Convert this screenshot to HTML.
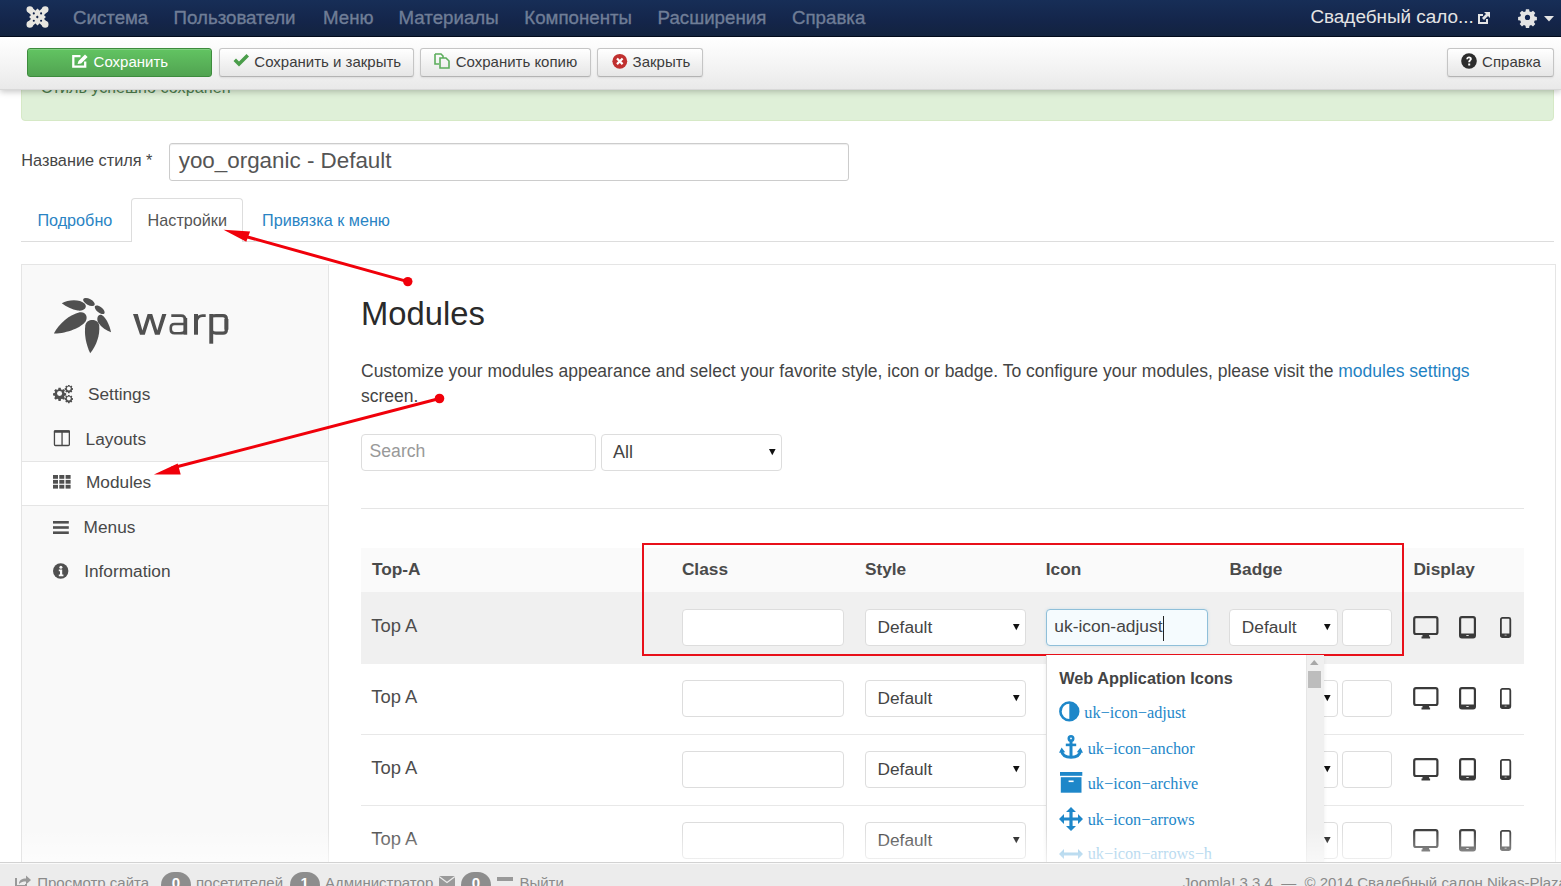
<!DOCTYPE html><html><head><meta charset="utf-8"><style>
*{margin:0;padding:0;box-sizing:border-box}
html,body{width:1561px;height:886px;overflow:hidden;background:#fff;font-family:"Liberation Sans",sans-serif}
.t{position:absolute;white-space:nowrap}
.b{position:absolute}
svg{position:absolute;overflow:visible}
</style></head><body><div class="b" style="left:21px;top:70px;width:1533px;height:50.5px;background:#dff0d8;border:1px solid #d6e9c6;border-radius:4px"></div>
<div class="t" style="left:40.8px;top:79.29px;font-size:16.2px;line-height:16.2px;color:#4d7d4d;font-weight:400;font-family:'Liberation Sans', sans-serif;">Стиль успешно сохранен</div>
<div class="b" style="left:0px;top:37px;width:1561px;height:53px;background:linear-gradient(#ffffff,#f3f3f3 60%,#e9e9e9);box-shadow:0 2px 6px rgba(0,0,0,.22);border-bottom:1px solid #d8d8d8"></div>
<div class="b" style="left:27px;top:48px;width:185px;height:29px;background:linear-gradient(#62c462,#51a351);border:1px solid #3d8b3d;border-radius:3px;box-shadow:inset 0 1px 0 rgba(255,255,255,.2)"></div>
<div class="b" style="left:219px;top:48px;width:195px;height:29px;background:linear-gradient(#ffffff,#e6e6e6);border:1px solid #c5c5c5;border-bottom-color:#b3b3b3;border-radius:3px;box-shadow:0 1px 2px rgba(0,0,0,.08)"></div>
<div class="b" style="left:420px;top:48px;width:171px;height:29px;background:linear-gradient(#ffffff,#e6e6e6);border:1px solid #c5c5c5;border-bottom-color:#b3b3b3;border-radius:3px;box-shadow:0 1px 2px rgba(0,0,0,.08)"></div>
<div class="b" style="left:597px;top:48px;width:106px;height:29px;background:linear-gradient(#ffffff,#e6e6e6);border:1px solid #c5c5c5;border-bottom-color:#b3b3b3;border-radius:3px;box-shadow:0 1px 2px rgba(0,0,0,.08)"></div>
<div class="b" style="left:1447px;top:48px;width:107px;height:29px;background:linear-gradient(#ffffff,#e6e6e6);border:1px solid #c5c5c5;border-bottom-color:#b3b3b3;border-radius:3px;box-shadow:0 1px 2px rgba(0,0,0,.08)"></div>
<div class="t" style="left:93.6px;top:54.30px;font-size:15px;line-height:15px;color:#fff;font-weight:400;font-family:'Liberation Sans', sans-serif;">Сохранить</div>
<div class="t" style="left:254.3px;top:54.30px;font-size:15px;line-height:15px;color:#3c3c3c;font-weight:400;font-family:'Liberation Sans', sans-serif;">Сохранить и закрыть</div>
<div class="t" style="left:455.7px;top:54.30px;font-size:15px;line-height:15px;color:#3c3c3c;font-weight:400;font-family:'Liberation Sans', sans-serif;">Сохранить копию</div>
<div class="t" style="left:632.6px;top:54.30px;font-size:15px;line-height:15px;color:#3c3c3c;font-weight:400;font-family:'Liberation Sans', sans-serif;">Закрыть</div>
<div class="t" style="left:1482.1px;top:54.30px;font-size:15px;line-height:15px;color:#3c3c3c;font-weight:400;font-family:'Liberation Sans', sans-serif;">Справка</div>
<svg style="left:72px;top:54px" width="16" height="14" viewBox="0 0 16 14"><path d="M8.5 2.2H1.3V12.7H13.2V7.5" fill="none" stroke="#fff" stroke-width="2.3"/><path d="M5.6 10L6.5 6.9L13 0.4L15.6 3L9.1 9.5z" fill="#fff"/></svg>
<svg style="left:233px;top:54px" width="16" height="13" viewBox="0 0 16 13"><path d="M0.5 7l2.5-2.5 3 3 7.5-7.5 2.5 2.5-10 10z" fill="#4a9d4a"/></svg>
<svg style="left:434px;top:53px" width="17" height="16" viewBox="0 0 17 16"><path d="M1 1h6l2 2v2" fill="none" stroke="#5cad5c" stroke-width="1.6"/><path d="M1 1v10h4" fill="none" stroke="#5cad5c" stroke-width="1.6"/><path d="M6 5h6l3 3v7h-9z" fill="none" stroke="#5cad5c" stroke-width="1.6"/></svg>
<svg style="left:612px;top:53.5px" width="16" height="15" viewBox="0 0 16 15"><circle cx="7.8" cy="7.3" r="7.4" fill="#c0302f"/><path d="M5 4.5l5.6 5.6M10.6 4.5L5 10.1" stroke="#fff" stroke-width="2.2"/></svg>
<svg style="left:1461px;top:52.5px" width="16" height="16" viewBox="0 0 16 16"><circle cx="8" cy="8" r="7.8" fill="#2d2d2d"/><path d="M5.3 6.2c0-1.7 1.2-2.6 2.8-2.6 1.6 0 2.7 .9 2.7 2.3 0 1.5-1.6 1.8-1.6 3v.4H7.3v-.6c0-1.6 1.6-1.9 1.6-2.7 0-.5-.4-.8-.9-.8-.6 0-1 .4-1 1z" fill="#fff"/><rect x="7.2" y="10.5" width="2" height="2" fill="#fff"/></svg>
<div class="b" style="left:0px;top:0px;width:1561px;height:37px;background:linear-gradient(#172e57,#14254a 60%,#13233f);border-bottom:1.5px solid #030b1c"></div>
<svg style="left:0;top:0" width="60" height="36" viewBox="0 0 60 36"><g fill="#e8e6e0"><circle cx="29.8" cy="9.5" r="3.3"/><circle cx="45.2" cy="9.5" r="3.3"/><circle cx="29.8" cy="24.4" r="3.3"/><circle cx="45.2" cy="24.4" r="3.3"/><path d="M37.5 8.6L45.9 17L37.5 25.4L29.1 17z"/></g><g stroke="#e8e6e0" stroke-width="6.2"><path d="M30 9.7L45 24.2M45 9.7L30 24.2"/></g><g fill="#0f1f45"><circle cx="33.8" cy="13.4" r="1.05"/><circle cx="41.1" cy="13.4" r="1.05"/><circle cx="33.8" cy="20.8" r="1.05"/><circle cx="41.1" cy="20.8" r="1.05"/><path d="M37.3 15.6l1.4 1.4-1.4 1.4-1.4-1.4z"/></g></svg>
<div class="t" style="left:73px;top:8.57px;font-size:18.7px;line-height:18.7px;color:#6f7d96;font-weight:400;font-family:'Liberation Sans', sans-serif;-webkit-text-stroke:0.35px #6f7d96">Система</div>
<div class="t" style="left:173.6px;top:8.57px;font-size:18.7px;line-height:18.7px;color:#6f7d96;font-weight:400;font-family:'Liberation Sans', sans-serif;-webkit-text-stroke:0.35px #6f7d96">Пользователи</div>
<div class="t" style="left:323px;top:8.57px;font-size:18.7px;line-height:18.7px;color:#6f7d96;font-weight:400;font-family:'Liberation Sans', sans-serif;-webkit-text-stroke:0.35px #6f7d96">Меню</div>
<div class="t" style="left:398.6px;top:8.57px;font-size:18.7px;line-height:18.7px;color:#6f7d96;font-weight:400;font-family:'Liberation Sans', sans-serif;-webkit-text-stroke:0.35px #6f7d96">Материалы</div>
<div class="t" style="left:524.3px;top:8.57px;font-size:18.7px;line-height:18.7px;color:#6f7d96;font-weight:400;font-family:'Liberation Sans', sans-serif;-webkit-text-stroke:0.35px #6f7d96">Компоненты</div>
<div class="t" style="left:657.6px;top:8.57px;font-size:18.7px;line-height:18.7px;color:#6f7d96;font-weight:400;font-family:'Liberation Sans', sans-serif;-webkit-text-stroke:0.35px #6f7d96">Расширения</div>
<div class="t" style="left:792px;top:8.57px;font-size:18.7px;line-height:18.7px;color:#6f7d96;font-weight:400;font-family:'Liberation Sans', sans-serif;-webkit-text-stroke:0.35px #6f7d96">Справка</div>
<div class="t" style="left:1310.4px;top:8.00px;font-size:18.9px;line-height:18.9px;color:#e4e4e4;font-weight:400;font-family:'Liberation Sans', sans-serif;">Свадебный сало...</div>
<svg style="left:1477px;top:11px" width="14" height="14" viewBox="0 0 14 14"><path d="M1 3h5v2H3v6h6V8h2v5H1z" fill="#e4e4e4"/><path d="M7 1h6v6l-2-2-4 4-2-2 4-4z" fill="#e4e4e4"/></svg>
<svg style="left:1519px;top:8.5px" width="18" height="17" viewBox="0 0 18 17"><g transform="translate(8.5,8.4)"><path fill="#e4e4e4" d="M-1.6,-8.2h3.2l.4,2.2 1.6,.7 1.9-1.3 2.3,2.3-1.3,1.9 .7,1.6 2.2,.4v3.2l-2.2,.4-.7,1.6 1.3,1.9-2.3,2.3-1.9-1.3-1.6,.7-.4,2.2h-3.2l-.4-2.2-1.6-.7-1.9,1.3-2.3-2.3 1.3-1.9-.7-1.6-2.2-.4v-3.2l2.2-.4 .7-1.6-1.3-1.9 2.3-2.3 1.9,1.3 1.6-.7z"/><circle r="2.6" fill="#112450"/></g></svg>
<svg style="left:1544px;top:16px" width="11" height="6" viewBox="0 0 11 6"><path d="M0 0h10l-5 5.5z" fill="#e4e4e4"/></svg>
<div class="t" style="left:21.3px;top:152.00px;font-size:16.3px;line-height:16.3px;color:#454545;font-weight:400;font-family:'Liberation Sans', sans-serif;">Название стиля *</div>
<div class="b" style="left:169px;top:143px;width:680px;height:38px;border:1px solid #cccccc;border-radius:3px;box-shadow:inset 0 1px 1px rgba(0,0,0,.075)"></div>
<div class="t" style="left:178.7px;top:150.24px;font-size:22.4px;line-height:22.4px;color:#555;font-weight:400;font-family:'Liberation Sans', sans-serif;">yoo_organic - Default</div>
<div class="b" style="left:21px;top:240.5px;width:1533px;height:1.0px;background:#dddddd"></div>
<div class="b" style="left:131px;top:198px;width:111.5px;height:44px;background:#fff;border:1px solid #dddddd;border-bottom:none;border-radius:4px 4px 0 0"></div>
<div class="t" style="left:37.4px;top:212.19px;font-size:16.2px;line-height:16.2px;color:#2a84c4;font-weight:400;font-family:'Liberation Sans', sans-serif;">Подробно</div>
<div class="t" style="left:147.6px;top:212.19px;font-size:16.2px;line-height:16.2px;color:#555;font-weight:400;font-family:'Liberation Sans', sans-serif;">Настройки</div>
<div class="t" style="left:262px;top:212.19px;font-size:16.2px;line-height:16.2px;color:#2a84c4;font-weight:400;font-family:'Liberation Sans', sans-serif;">Привязка к меню</div>
<div class="b" style="left:21px;top:264px;width:1535px;height:636px;background:#fff;border:1px solid #e5e5e5"></div>
<div class="b" style="left:22px;top:265px;width:307px;height:635px;background:#f9f9f9;border-right:1px solid #e5e5e5"></div>
<svg style="left:40px;top:280px" width="200" height="90" viewBox="0 0 1561 702"><g fill="#505050">
<path d="M170,182 C220,152 310,148 350,185 C372,212 345,245 295,238 C250,232 205,208 170,182 Z"/>
<ellipse cx="382" cy="172" rx="50" ry="24" transform="rotate(28 382 172)"/>
<ellipse cx="466" cy="232" rx="46" ry="22" transform="rotate(38 466 232)"/>
<path d="M108,418 C150,340 230,270 310,252 C352,244 378,282 356,322 C330,368 205,420 108,418 Z"/>
<path d="M392,572 C358,500 344,420 354,352 C364,298 452,298 462,352 C470,430 440,510 392,572 Z"/>
<path d="M555,408 C540,340 512,292 482,273 C452,262 438,300 454,332 C480,372 520,396 555,408 Z"/>
</g></svg>
<svg style="left:0;top:0" width="1561" height="886" viewBox="0 0 1561 886"><g fill="#505050">
<path d="M133,314 L137.8,314 L142.4,330.5 L147.6,314 L152.2,314 L157.3,330.5 L162.2,314 L166.4,314 L159.7,334.7 L155,334.7 L149.9,318.5 L144.8,334.7 L140,334.7 Z"/>
<rect x="194" y="314" width="4" height="20.7"/><rect x="209.3" y="314" width="3.9" height="29.7"/><rect x="183.4" y="318" width="3.8" height="16.7"/>
</g><g fill="none" stroke="#505050" stroke-width="2.6">
<path d="M171.3,315.6 H181 Q185.3,315.6 185.3,320"/>
<path d="M185.3,324 H174.5 Q170.8,324 170.8,327.5 V329.5 Q170.8,333.2 174.5,333.2 H180 Q184,333.2 185.3,331"/>
<path d="M196.5,321 Q198,315.6 202.5,315.6 H205.7"/>
<path d="M211,316 Q213,315.6 216,315.6 H223 Q226.4,315.6 226.4,319 V329.7 Q226.4,333.2 223,333.2 H216 Q213,333.2 211.2,331" stroke-width="3.2"/>
<path d="M226.4,319 V329.7" stroke-width="4"/>
</g></svg>
<div class="b" style="left:22px;top:461px;width:306px;height:45px;background:#fff;border-top:1px solid #e5e5e5;border-bottom:1px solid #e5e5e5"></div>
<div class="t" style="left:88px;top:386.00px;font-size:17.25px;line-height:17.25px;color:#484848;font-weight:400;font-family:'Liberation Sans', sans-serif;">Settings</div>
<div class="t" style="left:85.6px;top:430.70px;font-size:17.25px;line-height:17.25px;color:#484848;font-weight:400;font-family:'Liberation Sans', sans-serif;">Layouts</div>
<div class="t" style="left:86px;top:474.20px;font-size:17.25px;line-height:17.25px;color:#484848;font-weight:400;font-family:'Liberation Sans', sans-serif;">Modules</div>
<div class="t" style="left:83.6px;top:519.30px;font-size:17.25px;line-height:17.25px;color:#484848;font-weight:400;font-family:'Liberation Sans', sans-serif;">Menus</div>
<div class="t" style="left:84.2px;top:563.00px;font-size:17.25px;line-height:17.25px;color:#484848;font-weight:400;font-family:'Liberation Sans', sans-serif;">Information</div>
<svg style="left:53px;top:384px" width="21" height="19" viewBox="0 0 21 19"><g fill="#505050">
<g transform="translate(6.6,9.5) scale(0.86)"><path d="M-1.3,-6.6h2.6l.3,1.8 1.3,.6 1.5-1.1 1.9,1.9-1.1,1.5 .6,1.3 1.8,.3v2.6l-1.8,.3-.6,1.3 1.1,1.5-1.9,1.9-1.5-1.1-1.3,.6-.3,1.8h-2.6l-.3-1.8-1.3-.6-1.5,1.1-1.9-1.9 1.1-1.5-.6-1.3-1.8-.3v-2.6l1.8-.3 .6-1.3-1.1-1.5 1.9-1.9 1.5,1.1 1.3-.6z"/><circle r="2.9" fill="#f9f9f9"/></g>
<g transform="translate(15.8,4.5) scale(0.95)"><path d="M-.8,-3.8h1.6l.2,1 .7,.3 .9-.6 1.1,1.1-.6,.9 .3,.7 1,.2v1.6l-1,.2-.3,.7 .6,.9-1.1,1.1-.9-.6-.7,.3-.2,1h-1.6l-.2-1-.7-.3-.9,.6-1.1-1.1 .6-.9-.3-.7-1-.2v-1.6l1-.2 .3-.7-.6-.9 1.1-1.1 .9,.6 .7-.3z"/><circle r="2" fill="#f9f9f9"/></g>
<g transform="translate(15.8,14.5) scale(0.95)"><path d="M-.8,-3.8h1.6l.2,1 .7,.3 .9-.6 1.1,1.1-.6,.9 .3,.7 1,.2v1.6l-1,.2-.3,.7 .6,.9-1.1,1.1-.9-.6-.7,.3-.2,1h-1.6l-.2-1-.7-.3-.9,.6-1.1-1.1 .6-.9-.3-.7-1-.2v-1.6l1-.2 .3-.7-.6-.9 1.1-1.1 .9,.6 .7-.3z"/><circle r="2" fill="#f9f9f9"/></g>
</g></svg>
<svg style="left:53px;top:430px" width="18" height="17" viewBox="0 0 18 17"><rect x="1.45" y="0.9" width="14.9" height="14.6" rx="1" fill="none" stroke="#484848" stroke-width="1.3"/><rect x="0.8" y="0.2" width="16.2" height="2.5" rx="1" fill="#484848"/><rect x="8.4" y="1" width="1.3" height="14.6" fill="#484848"/></svg>
<svg style="left:53.4px;top:475px" width="18" height="14" viewBox="0 0 18 14"><g fill="#505050"><rect x="0.0" y="0.0" width="5" height="3.8"/><rect x="6.3" y="0.0" width="5" height="3.8"/><rect x="12.6" y="0.0" width="5" height="3.8"/><rect x="0.0" y="4.9" width="5" height="3.8"/><rect x="6.3" y="4.9" width="5" height="3.8"/><rect x="12.6" y="4.9" width="5" height="3.8"/><rect x="0.0" y="9.8" width="5" height="3.8"/><rect x="6.3" y="9.8" width="5" height="3.8"/><rect x="12.6" y="9.8" width="5" height="3.8"/></g></svg>
<svg style="left:53.4px;top:521px" width="16" height="13" viewBox="0 0 16 13"><g fill="#505050"><rect x="0" y="0" width="15.8" height="2.6"/><rect x="0" y="5.2" width="15.8" height="2.6"/><rect x="0" y="10.4" width="15.8" height="2.6"/></g></svg>
<svg style="left:53.4px;top:563px" width="16" height="16" viewBox="0 0 16 16"><circle cx="7.7" cy="8" r="7.7" fill="#505050"/><circle cx="7.9" cy="4.2" r="1.5" fill="#f9f9f9"/><path d="M5.8 6.6h3.4v5h1.2v1.6H5.8v-1.6h1.2V8.2H5.8z" fill="#f9f9f9"/></svg>
<div class="t" style="left:360.6px;top:297.36px;font-size:33.6px;line-height:33.6px;color:#2a2a2a;font-weight:400;font-family:'Liberation Sans', sans-serif;transform:scaleX(0.975);transform-origin:0 0">Modules</div>
<div class="t" style="left:361px;top:362.79px;font-size:17.5px;line-height:17.5px;color:#444;font-weight:400;font-family:'Liberation Sans', sans-serif;">Customize your modules appearance and select your favorite style, icon or badge. To configure your modules, please visit the <span style="color:#1f82c3">modules settings</span></div>
<div class="t" style="left:361px;top:388.19px;font-size:17.5px;line-height:17.5px;color:#444;font-weight:400;font-family:'Liberation Sans', sans-serif;">screen.</div>
<div class="b" style="left:361px;top:434px;width:235px;height:37px;background:#fff;border:1px solid #dddddd;border-radius:4px;"></div>
<div class="t" style="left:369.6px;top:443.40px;font-size:17.6px;line-height:17.6px;color:#999;font-weight:400;font-family:'Liberation Sans', sans-serif;">Search</div>
<div class="b" style="left:601px;top:434px;width:181px;height:37px;background:#fff;border:1px solid #dddddd;border-radius:4px;"></div>
<div class="t" style="left:612.9px;top:443.06px;font-size:18px;line-height:18px;color:#444;font-weight:400;font-family:'Liberation Sans', sans-serif;">All</div>
<svg style="left:768.5px;top:448.5px" width="7" height="7" viewBox="0 0 7 7"><path d="M0 0h6.6l-3.3 6.2z" fill="#111"/></svg>
<div class="b" style="left:361px;top:508px;width:1163px;height:1px;background:#e5e5e5"></div>
<div class="b" style="left:361px;top:547.5px;width:1163px;height:44.5px;background:#fafafa"></div>
<div class="b" style="left:361px;top:592px;width:1163px;height:71.5px;background:#f0f0f0"></div>
<div class="b" style="left:361px;top:734px;width:1163px;height:1px;background:#e8e8e8"></div>
<div class="b" style="left:361px;top:805px;width:1163px;height:1px;background:#e8e8e8"></div>
<div class="t" style="left:371.9px;top:560.76px;font-size:17.3px;line-height:17.3px;color:#4a4a4a;font-weight:700;font-family:'Liberation Sans', sans-serif;">Top-A</div>
<div class="t" style="left:681.9px;top:560.76px;font-size:17.3px;line-height:17.3px;color:#4a4a4a;font-weight:700;font-family:'Liberation Sans', sans-serif;">Class</div>
<div class="t" style="left:864.9px;top:560.76px;font-size:17.3px;line-height:17.3px;color:#4a4a4a;font-weight:700;font-family:'Liberation Sans', sans-serif;">Style</div>
<div class="t" style="left:1045.8px;top:560.76px;font-size:17.3px;line-height:17.3px;color:#4a4a4a;font-weight:700;font-family:'Liberation Sans', sans-serif;">Icon</div>
<div class="t" style="left:1229.6px;top:560.76px;font-size:17.3px;line-height:17.3px;color:#4a4a4a;font-weight:700;font-family:'Liberation Sans', sans-serif;">Badge</div>
<div class="t" style="left:1413.4px;top:560.76px;font-size:17.3px;line-height:17.3px;color:#4a4a4a;font-weight:700;font-family:'Liberation Sans', sans-serif;">Display</div>
<div class="t" style="left:371.3px;top:617.02px;font-size:18.4px;line-height:18.4px;color:#4d4d4d;font-weight:400;font-family:'Liberation Sans', sans-serif;">Top A</div>
<div class="b" style="left:682px;top:609px;width:162px;height:37px;background:#fff;border:1px solid #dddddd;border-radius:4px;"></div>
<div class="b" style="left:865px;top:609px;width:161px;height:37px;background:#fff;border:1px solid #dddddd;border-radius:4px;"></div>
<div class="t" style="left:877.5px;top:619.06px;font-size:17.3px;line-height:17.3px;color:#444;font-weight:400;font-family:'Liberation Sans', sans-serif;">Default</div>
<svg style="left:1012.8px;top:623.5px" width="7" height="7" viewBox="0 0 7 7"><path d="M0 0h6.6l-3.3 6.2z" fill="#111"/></svg>
<div class="b" style="left:1229px;top:609px;width:109px;height:37px;background:#fff;border:1px solid #dddddd;border-radius:4px;"></div>
<div class="t" style="left:1241.8px;top:619.06px;font-size:17.3px;line-height:17.3px;color:#444;font-weight:400;font-family:'Liberation Sans', sans-serif;">Default</div>
<svg style="left:1324.3px;top:623.5px" width="7" height="7" viewBox="0 0 7 7"><path d="M0 0h6.6l-3.3 6.2z" fill="#111"/></svg>
<div class="b" style="left:1342px;top:609px;width:50px;height:37px;background:#fff;border:1px solid #dddddd;border-radius:4px;"></div>
<svg style="left:1413px;top:616px" width="26" height="23" viewBox="0 0 26 23"><rect x="1.2" y="1.2" width="23.2" height="16.8" rx="1.8" fill="none" stroke="#3a3a3a" stroke-width="2.2"/><rect x="9.5" y="18" width="6.6" height="3" fill="#3a3a3a"/><rect x="8.5" y="20.5" width="8.6" height="2" fill="#3a3a3a"/></svg>
<svg style="left:1458.5px;top:616px" width="17" height="23" viewBox="0 0 17 23"><rect x="1.1" y="1.1" width="14.8" height="20.2" rx="1.8" fill="none" stroke="#3a3a3a" stroke-width="2.2"/><rect x="1" y="17.5" width="15" height="4" fill="#3a3a3a"/><rect x="7.3" y="19" width="2.4" height="1" fill="#ddd"/></svg>
<svg style="left:1499.5px;top:617px" width="12" height="21" viewBox="0 0 12 21"><rect x="0.9" y="0.9" width="9.4" height="19.2" rx="1.5" fill="none" stroke="#3a3a3a" stroke-width="1.8"/><rect x="0.8" y="16.5" width="9.6" height="3.6" fill="#3a3a3a"/><rect x="4.6" y="17.6" width="2" height="1.2" fill="#999"/></svg>
<div class="t" style="left:371.3px;top:688.02px;font-size:18.4px;line-height:18.4px;color:#4d4d4d;font-weight:400;font-family:'Liberation Sans', sans-serif;">Top A</div>
<div class="b" style="left:682px;top:680px;width:162px;height:37px;background:#fff;border:1px solid #dddddd;border-radius:4px;"></div>
<div class="b" style="left:865px;top:680px;width:161px;height:37px;background:#fff;border:1px solid #dddddd;border-radius:4px;"></div>
<div class="t" style="left:877.5px;top:690.06px;font-size:17.3px;line-height:17.3px;color:#444;font-weight:400;font-family:'Liberation Sans', sans-serif;">Default</div>
<svg style="left:1012.8px;top:694.5px" width="7" height="7" viewBox="0 0 7 7"><path d="M0 0h6.6l-3.3 6.2z" fill="#111"/></svg>
<div class="b" style="left:1229px;top:680px;width:109px;height:37px;background:#fff;border:1px solid #dddddd;border-radius:4px;"></div>
<div class="t" style="left:1241.8px;top:690.06px;font-size:17.3px;line-height:17.3px;color:#444;font-weight:400;font-family:'Liberation Sans', sans-serif;">Default</div>
<svg style="left:1324.3px;top:694.5px" width="7" height="7" viewBox="0 0 7 7"><path d="M0 0h6.6l-3.3 6.2z" fill="#111"/></svg>
<div class="b" style="left:1342px;top:680px;width:50px;height:37px;background:#fff;border:1px solid #dddddd;border-radius:4px;"></div>
<div class="b" style="left:1046px;top:680px;width:162px;height:37px;background:#fff;border:1px solid #dddddd;border-radius:4px;"></div>
<svg style="left:1413px;top:687px" width="26" height="23" viewBox="0 0 26 23"><rect x="1.2" y="1.2" width="23.2" height="16.8" rx="1.8" fill="none" stroke="#3a3a3a" stroke-width="2.2"/><rect x="9.5" y="18" width="6.6" height="3" fill="#3a3a3a"/><rect x="8.5" y="20.5" width="8.6" height="2" fill="#3a3a3a"/></svg>
<svg style="left:1458.5px;top:687px" width="17" height="23" viewBox="0 0 17 23"><rect x="1.1" y="1.1" width="14.8" height="20.2" rx="1.8" fill="none" stroke="#3a3a3a" stroke-width="2.2"/><rect x="1" y="17.5" width="15" height="4" fill="#3a3a3a"/><rect x="7.3" y="19" width="2.4" height="1" fill="#ddd"/></svg>
<svg style="left:1499.5px;top:688px" width="12" height="21" viewBox="0 0 12 21"><rect x="0.9" y="0.9" width="9.4" height="19.2" rx="1.5" fill="none" stroke="#3a3a3a" stroke-width="1.8"/><rect x="0.8" y="16.5" width="9.6" height="3.6" fill="#3a3a3a"/><rect x="4.6" y="17.6" width="2" height="1.2" fill="#999"/></svg>
<div class="t" style="left:371.3px;top:759.02px;font-size:18.4px;line-height:18.4px;color:#4d4d4d;font-weight:400;font-family:'Liberation Sans', sans-serif;">Top A</div>
<div class="b" style="left:682px;top:751px;width:162px;height:37px;background:#fff;border:1px solid #dddddd;border-radius:4px;"></div>
<div class="b" style="left:865px;top:751px;width:161px;height:37px;background:#fff;border:1px solid #dddddd;border-radius:4px;"></div>
<div class="t" style="left:877.5px;top:761.06px;font-size:17.3px;line-height:17.3px;color:#444;font-weight:400;font-family:'Liberation Sans', sans-serif;">Default</div>
<svg style="left:1012.8px;top:765.5px" width="7" height="7" viewBox="0 0 7 7"><path d="M0 0h6.6l-3.3 6.2z" fill="#111"/></svg>
<div class="b" style="left:1229px;top:751px;width:109px;height:37px;background:#fff;border:1px solid #dddddd;border-radius:4px;"></div>
<div class="t" style="left:1241.8px;top:761.06px;font-size:17.3px;line-height:17.3px;color:#444;font-weight:400;font-family:'Liberation Sans', sans-serif;">Default</div>
<svg style="left:1324.3px;top:765.5px" width="7" height="7" viewBox="0 0 7 7"><path d="M0 0h6.6l-3.3 6.2z" fill="#111"/></svg>
<div class="b" style="left:1342px;top:751px;width:50px;height:37px;background:#fff;border:1px solid #dddddd;border-radius:4px;"></div>
<div class="b" style="left:1046px;top:751px;width:162px;height:37px;background:#fff;border:1px solid #dddddd;border-radius:4px;"></div>
<svg style="left:1413px;top:758px" width="26" height="23" viewBox="0 0 26 23"><rect x="1.2" y="1.2" width="23.2" height="16.8" rx="1.8" fill="none" stroke="#3a3a3a" stroke-width="2.2"/><rect x="9.5" y="18" width="6.6" height="3" fill="#3a3a3a"/><rect x="8.5" y="20.5" width="8.6" height="2" fill="#3a3a3a"/></svg>
<svg style="left:1458.5px;top:758px" width="17" height="23" viewBox="0 0 17 23"><rect x="1.1" y="1.1" width="14.8" height="20.2" rx="1.8" fill="none" stroke="#3a3a3a" stroke-width="2.2"/><rect x="1" y="17.5" width="15" height="4" fill="#3a3a3a"/><rect x="7.3" y="19" width="2.4" height="1" fill="#ddd"/></svg>
<svg style="left:1499.5px;top:759px" width="12" height="21" viewBox="0 0 12 21"><rect x="0.9" y="0.9" width="9.4" height="19.2" rx="1.5" fill="none" stroke="#3a3a3a" stroke-width="1.8"/><rect x="0.8" y="16.5" width="9.6" height="3.6" fill="#3a3a3a"/><rect x="4.6" y="17.6" width="2" height="1.2" fill="#999"/></svg>
<div class="t" style="left:371.3px;top:830.02px;font-size:18.4px;line-height:18.4px;color:#4d4d4d;font-weight:400;font-family:'Liberation Sans', sans-serif;">Top A</div>
<div class="b" style="left:682px;top:822px;width:162px;height:37px;background:#fff;border:1px solid #dddddd;border-radius:4px;"></div>
<div class="b" style="left:865px;top:822px;width:161px;height:37px;background:#fff;border:1px solid #dddddd;border-radius:4px;"></div>
<div class="t" style="left:877.5px;top:832.06px;font-size:17.3px;line-height:17.3px;color:#444;font-weight:400;font-family:'Liberation Sans', sans-serif;">Default</div>
<svg style="left:1012.8px;top:836.5px" width="7" height="7" viewBox="0 0 7 7"><path d="M0 0h6.6l-3.3 6.2z" fill="#111"/></svg>
<div class="b" style="left:1229px;top:822px;width:109px;height:37px;background:#fff;border:1px solid #dddddd;border-radius:4px;"></div>
<div class="t" style="left:1241.8px;top:832.06px;font-size:17.3px;line-height:17.3px;color:#444;font-weight:400;font-family:'Liberation Sans', sans-serif;">Default</div>
<svg style="left:1324.3px;top:836.5px" width="7" height="7" viewBox="0 0 7 7"><path d="M0 0h6.6l-3.3 6.2z" fill="#111"/></svg>
<div class="b" style="left:1342px;top:822px;width:50px;height:37px;background:#fff;border:1px solid #dddddd;border-radius:4px;"></div>
<div class="b" style="left:1046px;top:822px;width:162px;height:37px;background:#fff;border:1px solid #dddddd;border-radius:4px;"></div>
<svg style="left:1413px;top:829px" width="26" height="23" viewBox="0 0 26 23"><rect x="1.2" y="1.2" width="23.2" height="16.8" rx="1.8" fill="none" stroke="#3a3a3a" stroke-width="2.2"/><rect x="9.5" y="18" width="6.6" height="3" fill="#3a3a3a"/><rect x="8.5" y="20.5" width="8.6" height="2" fill="#3a3a3a"/></svg>
<svg style="left:1458.5px;top:829px" width="17" height="23" viewBox="0 0 17 23"><rect x="1.1" y="1.1" width="14.8" height="20.2" rx="1.8" fill="none" stroke="#3a3a3a" stroke-width="2.2"/><rect x="1" y="17.5" width="15" height="4" fill="#3a3a3a"/><rect x="7.3" y="19" width="2.4" height="1" fill="#ddd"/></svg>
<svg style="left:1499.5px;top:830px" width="12" height="21" viewBox="0 0 12 21"><rect x="0.9" y="0.9" width="9.4" height="19.2" rx="1.5" fill="none" stroke="#3a3a3a" stroke-width="1.8"/><rect x="0.8" y="16.5" width="9.6" height="3.6" fill="#3a3a3a"/><rect x="4.6" y="17.6" width="2" height="1.2" fill="#999"/></svg>
<div class="b" style="left:1046px;top:609px;width:162px;height:37px;background:#f5fbfe;border:1px solid #8fbfd9;border-radius:4px;box-shadow:0 0 3px rgba(100,170,210,.25)"></div>
<div class="t" style="left:1054.3px;top:618.47px;font-size:17.4px;line-height:17.4px;color:#444;font-weight:400;font-family:'Liberation Sans', sans-serif;">uk-icon-adjust</div>
<div class="b" style="left:1163px;top:615.5px;width:1.2000000000000455px;height:25.0px;background:#222"></div>
<div class="b" style="left:642px;top:543px;width:762px;height:112.5px;border:2px solid #e8101a"></div>
<div class="b" style="left:1046px;top:655px;width:278px;height:207px;background:#fff;border-left:1px solid #dcdcdc;box-shadow:0 2px 4px rgba(0,0,0,.08)"></div>
<div class="b" style="left:1306px;top:655px;width:18px;height:207px;background:#f0f0f0;border-left:1px solid #e6e6e6"></div>
<div class="b" style="left:1308px;top:670.5px;width:13px;height:17.5px;background:#bdbdbd"></div>
<svg style="left:1310px;top:660px" width="9" height="5" viewBox="0 0 9 5"><path d="M0 5h8.5L4.25 0z" fill="#a8a8a8"/></svg>
<div class="t" style="left:1059.2px;top:669.80px;font-size:16.3px;line-height:16.3px;color:#444;font-weight:700;font-family:'Liberation Sans', sans-serif;">Web Application Icons</div>
<div class="t" style="left:1084.3px;top:704.75px;font-size:16.3px;line-height:16.3px;color:#1e87c9;font-weight:400;font-family:'Liberation Serif', serif;">uk−icon−adjust</div>
<div class="t" style="left:1087.7px;top:741.35px;font-size:16.3px;line-height:16.3px;color:#1e87c9;font-weight:400;font-family:'Liberation Serif', serif;">uk−icon−anchor</div>
<div class="t" style="left:1087.7px;top:776.25px;font-size:16.3px;line-height:16.3px;color:#1e87c9;font-weight:400;font-family:'Liberation Serif', serif;">uk−icon−archive</div>
<div class="t" style="left:1087.7px;top:811.85px;font-size:16.3px;line-height:16.3px;color:#1e87c9;font-weight:400;font-family:'Liberation Serif', serif;">uk−icon−arrows</div>
<div class="t" style="left:1087.7px;top:846.35px;font-size:16.3px;line-height:16.3px;color:#8cc3e6;font-weight:400;font-family:'Liberation Serif', serif;">uk−icon−arrows−h</div>
<svg style="left:1059px;top:701px" width="21" height="21" viewBox="0 0 21 21"><circle cx="10.3" cy="10.4" r="8.9" fill="none" stroke="#1e87c9" stroke-width="2.6"/><path d="M10.3 1.5A8.9 8.9 0 0 1 10.3 19.3z" fill="#1e87c9"/></svg>
<svg style="left:1059px;top:735px" width="24" height="24" viewBox="0 0 24 24"><g fill="none" stroke="#1e87c9" stroke-width="2.6"><circle cx="12" cy="3.4" r="2.2"/><path d="M2.4 15.5Q3.5 22.3 12 22.3Q20.5 22.3 21.6 15.5" stroke-width="3"/></g><g fill="#1e87c9"><rect x="10.5" y="5" width="3" height="17"/><rect x="6.8" y="8.6" width="10.4" height="2.6"/><path d="M0 17.8L2.6 12.6L6.2 17.2z M24 17.8L21.4 12.6L17.8 17.2z"/></g></svg>
<svg style="left:1060px;top:772px" width="23" height="21" viewBox="0 0 23 21"><rect x="0" y="0" width="22.3" height="3.8" fill="#1e87c9"/><rect x="0.8" y="5.2" width="20.7" height="15.5" fill="#1e87c9"/><rect x="8.6" y="8.5" width="5" height="1.6" fill="#fff"/></svg>
<svg style="left:1059px;top:806.5px" width="24" height="24" viewBox="0 0 24 24"><path fill="#1e87c9" d="M12 0L17 5H13.6V10.4H19V7L24 12L19 17V13.6H13.6V19H17L12 24L7 19H10.4V13.6H5V17L0 12L5 7V10.4H10.4V5H7z"/></svg>
<svg style="left:1059px;top:849px" width="24" height="10" viewBox="0 0 24 10"><path d="M0 5L5 0V3.4H19V0L24 5L19 10V6.6H5V10z" fill="#8cc3e6"/></svg>
<div class="b" style="left:22px;top:828px;width:1534px;height:34px;background:linear-gradient(rgba(255,255,255,0),rgba(255,255,255,.55))"></div>
<svg style="left:0;top:0" width="1561" height="886" viewBox="0 0 1561 886">
<g stroke="#f0000a" stroke-width="3" fill="none" stroke-linecap="round"><path d="M244 236 L407.8 281.6"/><path d="M172 468 L439.5 398.5"/></g>
<g fill="#f0000a"><circle cx="407.8" cy="281.6" r="4.7"/><circle cx="439.5" cy="398.5" r="4.8"/>
<path d="M223.5 229.7 L250.1 231.4 L246.3 241.8 Z"/>
<path d="M153.9 474.4 L177.7 463.5 L180.7 474.4 Z"/></g></svg>
<div class="b" style="left:0px;top:862px;width:1561px;height:24px;background:#ececec;border-top:1px solid #d2d2d2;box-shadow:inset 0 1px 0 #fafafa"></div>
<div class="t" style="left:37.2px;top:875.30px;font-size:15px;line-height:15px;color:#8a8a8a;font-weight:400;font-family:'Liberation Sans', sans-serif;">Просмотр сайта</div>
<div class="t" style="left:196px;top:875.30px;font-size:15px;line-height:15px;color:#8a8a8a;font-weight:400;font-family:'Liberation Sans', sans-serif;">посетителей</div>
<div class="t" style="left:325px;top:875.30px;font-size:15px;line-height:15px;color:#8a8a8a;font-weight:400;font-family:'Liberation Sans', sans-serif;">Администратор</div>
<div class="t" style="left:519.4px;top:875.30px;font-size:15px;line-height:15px;color:#8a8a8a;font-weight:400;font-family:'Liberation Sans', sans-serif;">Выйти</div>
<div class="t" style="left:1182.8px;top:875.30px;font-size:15px;line-height:15px;color:#8a8a8a;font-weight:400;font-family:'Liberation Sans', sans-serif;">Joomla! 3.3.4&nbsp; —&nbsp; © 2014 Свадебный салон Nikas-Plaza</div>
<div class="b" style="left:161.2px;top:872px;width:30.30000000000001px;height:26px;background:#8d8d8d;border-radius:13px"></div>
<div class="t" style="left:171.85px;top:875.30px;font-size:15px;line-height:15px;color:#fff;font-weight:700;font-family:'Liberation Sans', sans-serif;">0</div>
<div class="b" style="left:290.3px;top:872px;width:29.5px;height:26px;background:#8d8d8d;border-radius:13px"></div>
<div class="t" style="left:300.55px;top:875.30px;font-size:15px;line-height:15px;color:#fff;font-weight:700;font-family:'Liberation Sans', sans-serif;">1</div>
<div class="b" style="left:461.2px;top:872px;width:30.0px;height:26px;background:#8d8d8d;border-radius:13px"></div>
<div class="t" style="left:471.7px;top:875.30px;font-size:15px;line-height:15px;color:#fff;font-weight:700;font-family:'Liberation Sans', sans-serif;">0</div>
<svg style="left:14.5px;top:875px" width="16" height="12" viewBox="0 0 16 12"><path d="M1 3v8h10V9" fill="none" stroke="#999" stroke-width="2"/><path d="M4 9c0-4 3-5.5 7-5.5V.5l5 4.5-5 4.5V6.5c-3 0-5 .5-7 2.5z" fill="#999"/></svg>
<svg style="left:439.4px;top:876px" width="16" height="11" viewBox="0 0 16 11"><rect x="0" y="0" width="16" height="11" fill="#9a9a9a"/><path d="M0 .5l8 6 8-6" fill="none" stroke="#ececec" stroke-width="1.2"/></svg>
<div class="b" style="left:497px;top:877px;width:16.200000000000045px;height:3.5px;background:#999"></div></body></html>
